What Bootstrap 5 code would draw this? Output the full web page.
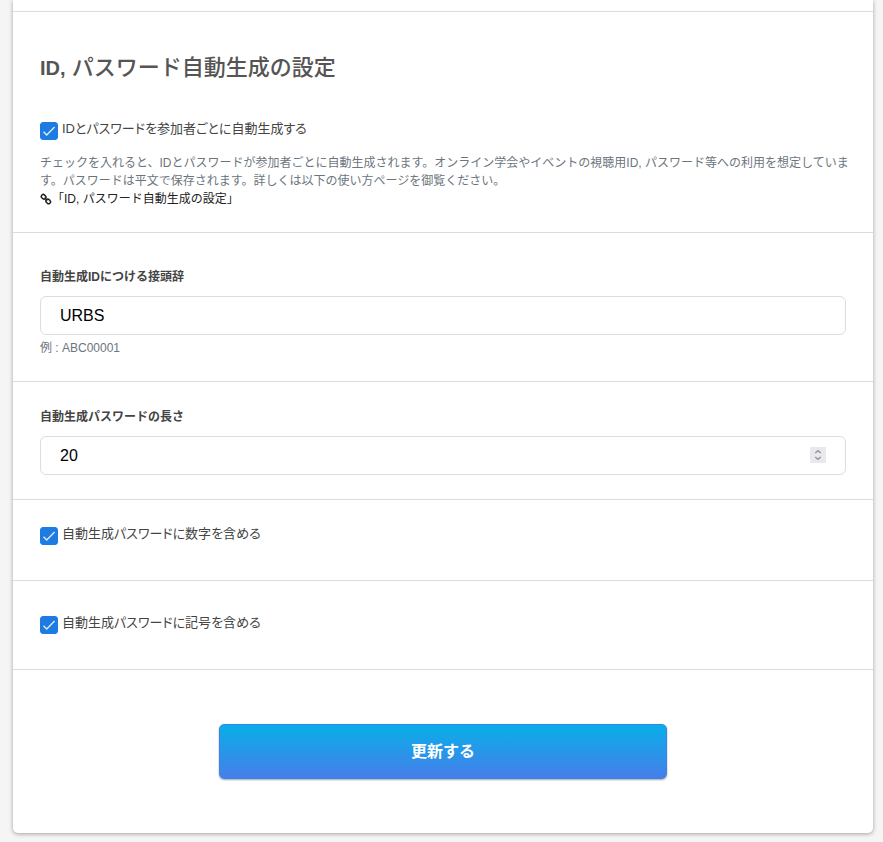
<!DOCTYPE html>
<html lang="ja">
<head>
<meta charset="utf-8">
<meta name="viewport" content="width=device-width, initial-scale=1">
<title>ID, パスワード自動生成の設定</title>
<link href="https://cdn.jsdelivr.net/npm/bootstrap@5.3.0/dist/css/bootstrap.min.css" rel="stylesheet">
<style>
  body { background: #f5f5f5; color: #444; font: 12px/18px "Liberation Sans", "Noto Sans CJK JP", sans-serif; }
  .page-wrap { padding: 0 10px 9px 13px; }
  .settings-panel { border-radius: 0 0 5px 5px; box-shadow: 0 1px 4px rgba(0,0,0,.35); }
  .panel-section { padding: 26px 27px 24px; border-bottom: 1px solid #dcdcdc; }
  .panel-previous { padding: 11px 0 0; }
  .panel-intro { padding-top: 41px; }
  .panel-prefix { padding-top: 35px; }
  .panel-digits { padding-top: 25px; padding-bottom: 35px; }
  .panel-symbols { padding-top: 33px; padding-bottom: 35px; }
  .panel-submit { padding-top: 54px; padding-bottom: 54px; border-bottom: 0; }
  .panel-heading { font-size: 22px; line-height: 30px; font-weight: 500; margin-bottom: 37px; color: #555; }
  .panel-heading b { font-size: 20px; }
  .check-row { gap: 4px; }
  .check-row label { font-size: 13px; font-feature-settings: "palt"; }
  .check-row .form-check-input { width: 18px; height: 18px; margin: 2px 0 0; border-radius: 3px; flex: none; }
  .check-row .form-check-input:checked { border-color: #1e7be2; background-color: #1e7be2; background-size: 18px 18px;
    background-image: url("data:image/svg+xml,%3Csvg xmlns='http://www.w3.org/2000/svg' viewBox='0 0 18 18'%3E%3Cpath d='M3.5 9.8 6.7 13 14.6 5' fill='none' stroke='%23dceafa' stroke-width='1.4'/%3E%3C/svg%3E"); }
  .help-block { color: #6c757d; margin: 14px -8px 0 0; }
  .help-block a { color: #222; }
  .help-block a svg { vertical-align: -2px; }
  .field-label { font-weight: 700; margin-bottom: 10px; color: #444; }
  .field-box { height: 39px; padding: 6px 19px; border-color: #ddd; border-radius: 6px; font-size: 16px; color: #000; }
  .field-box::-webkit-inner-spin-button { -webkit-appearance: none; opacity: 1; width: 16px; height: 16px;
    background: #e9e9ed url("data:image/svg+xml,%3Csvg xmlns='http://www.w3.org/2000/svg' viewBox='0 0 16 16'%3E%3Cpath d='M5.3 6 8 3.6 10.7 6M5.3 10 8 12.4 10.7 10' fill='none' stroke='%238f8f9d' stroke-width='1.4'/%3E%3C/svg%3E"); }
  .field-hint { color: #6c757d; margin-top: 4px; }
  .submit-btn { max-width: 448px; height: 55px; font-size: 16px; font-weight: 700; color: #fff; border: 1px solid #3b82ea;
    border-radius: 5px; background: linear-gradient(#08afe8, #467eea); box-shadow: 0 1px 2px rgba(0,0,0,.35); }
</style>
<script src="https://cdn.jsdelivr.net/npm/bootstrap@5.3.0/dist/js/bootstrap.bundle.min.js"></script>
</head>
<body>
<main class="page-wrap">
  <form class="settings-panel bg-white">
    <div class="panel-section panel-previous"></div>

    <section class="panel-section panel-intro">
      <h2 class="panel-heading"><b>ID,</b> パスワード自動生成の設定</h2>
      <div class="check-row d-flex align-items-start">
        <input class="form-check-input" type="checkbox" id="auto" checked>
        <label for="auto">IDとパスワードを参加者ごとに自動生成する</label>
      </div>
      <p class="help-block">チェックを入れると、IDとパスワードが参加者ごとに自動生成されます。オンライン学会やイベントの視聴用ID, パスワード等への利用を想定しています。パスワードは平文で保存されます。詳しくは以下の使い方ページを御覧ください。<br>
        <a class="text-decoration-none" href="#"><svg width="12" height="12" viewBox="0 0 12 12" fill="none" stroke="currentColor" stroke-width="1.5" aria-hidden="true"><rect x="1.2" y="1.9" width="4.8" height="3.8" rx="1.8" transform="rotate(45 3.6 3.8)"/><rect x="5.8" y="6.5" width="4.8" height="3.8" rx="1.8" transform="rotate(45 8.2 8.4)"/><path d="m4.6 4.8 2.7 2.7"/></svg>「ID, パスワード自動生成の設定」</a>
      </p>
    </section>

    <section class="panel-section panel-prefix">
      <label class="field-label d-block" for="prefix">自動生成IDにつける接頭辞</label>
      <input class="form-control field-box" type="text" id="prefix" value="URBS">
      <div class="field-hint">例 : ABC00001</div>
    </section>

    <section class="panel-section">
      <label class="field-label d-block" for="length">自動生成パスワードの長さ</label>
      <input class="form-control field-box" type="number" id="length" value="20">
    </section>

    <section class="panel-section panel-digits">
      <div class="check-row d-flex align-items-start">
        <input class="form-check-input" type="checkbox" id="digits" checked>
        <label for="digits">自動生成パスワードに数字を含める</label>
      </div>
    </section>

    <section class="panel-section panel-symbols">
      <div class="check-row d-flex align-items-start">
        <input class="form-check-input" type="checkbox" id="symbols" checked>
        <label for="symbols">自動生成パスワードに記号を含める</label>
      </div>
    </section>

    <div class="panel-section panel-submit text-center">
      <button class="btn submit-btn w-100" type="submit">更新する</button>
    </div>
  </form>
</main>
</body>
</html>
